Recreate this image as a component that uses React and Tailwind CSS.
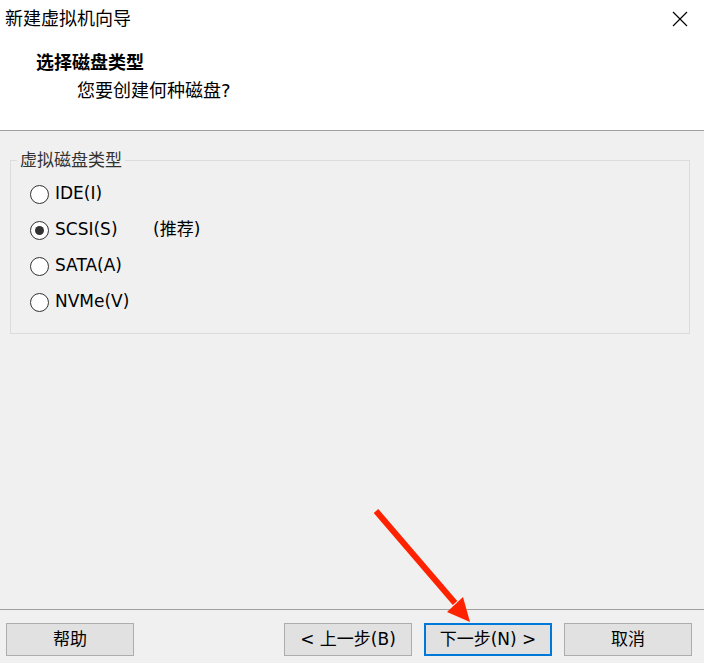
import React from "react";

const font = { fontFamily: '"DejaVu Sans", "Noto Sans CJK SC", sans-serif' };

const Radio = ({ label, checked, extra }) => (
    <div className="flex items-center h-[36px]">
        <span className="w-[19px] h-[19px] rounded-full border border-[#333] bg-white flex items-center justify-center">
            {checked && <span className="w-[9px] h-[9px] rounded-full bg-[#333]" />}
        </span>
        <span className="ml-[6px] text-[17px] text-black w-[98px]">{label}</span>
        {extra && <span className="text-[17px] text-black">{extra}</span>}
    </div>
);

const Btn = ({ children, primary }) => (
    <button
        className={
            "w-[128px] h-[33px] bg-[#e1e1e1] text-[17px] text-black flex items-center justify-center " +
            (primary ? "border-2 border-[#0078d7]" : "border border-[#adadad]")
        }
    >
        {children}
    </button>
);

export default function App() {
    return (
        <div className="relative w-[704px] h-[663px] flex flex-col bg-[#f0f0f0] overflow-hidden" style={font}>
            <div className="h-[131px] bg-white border-b border-[#a0a0a0] flex flex-col">
                <div className="flex justify-between items-center h-[37px] pl-[5px] pr-[16px]">
                    <span className="text-[18px] text-black">新建虚拟机向导</span>
                    <svg width="16" height="16" viewBox="0 0 16 16">
                        <path d="M1 1L15 15M15 1L1 15" stroke="#000" strokeWidth="1.2" />
                    </svg>
                </div>
                <div className="pl-[36px] mt-[8px] text-[18px] font-bold text-black leading-[36px]">选择磁盘类型</div>
                <div className="pl-[77px] text-[18px] text-black leading-[20px]">您要创建何种磁盘?</div>
            </div>
            <div className="flex-1 px-[10px] pt-[19px]">
                <fieldset className="w-[680px] h-[184px] border border-[#dcdcdc] px-[6px] pt-[6px]">
                    <legend className="px-[3px] text-[17px] text-[#333] leading-[20px]">虚拟磁盘类型</legend>
                    <div className="pl-[13px]">
                        <Radio label="IDE(I)" />
                        <Radio label="SCSI(S)" checked extra="(推荐)" />
                        <Radio label="SATA(A)" />
                        <Radio label="NVMe(V)" />
                    </div>
                </fieldset>
            </div>
            <div className="h-[54px] border-t border-[#a0a0a0] flex items-start pt-[13px] pl-[6px]">
                <Btn>帮助</Btn>
                <div className="ml-[150px] flex gap-[12px]">
                    <Btn>&lt; 上一步(B)</Btn>
                    <Btn primary>下一步(N) &gt;</Btn>
                    <Btn>取消</Btn>
                </div>
            </div>
            <svg className="absolute left-0 top-0 pointer-events-none" width="704" height="663">
                <line x1="376" y1="511" x2="455" y2="603" stroke="#ff2200" strokeWidth="6" />
                <polygon points="447,612 463,597 470,622" fill="#ff2200" />
            </svg>
        </div>
    );
}
